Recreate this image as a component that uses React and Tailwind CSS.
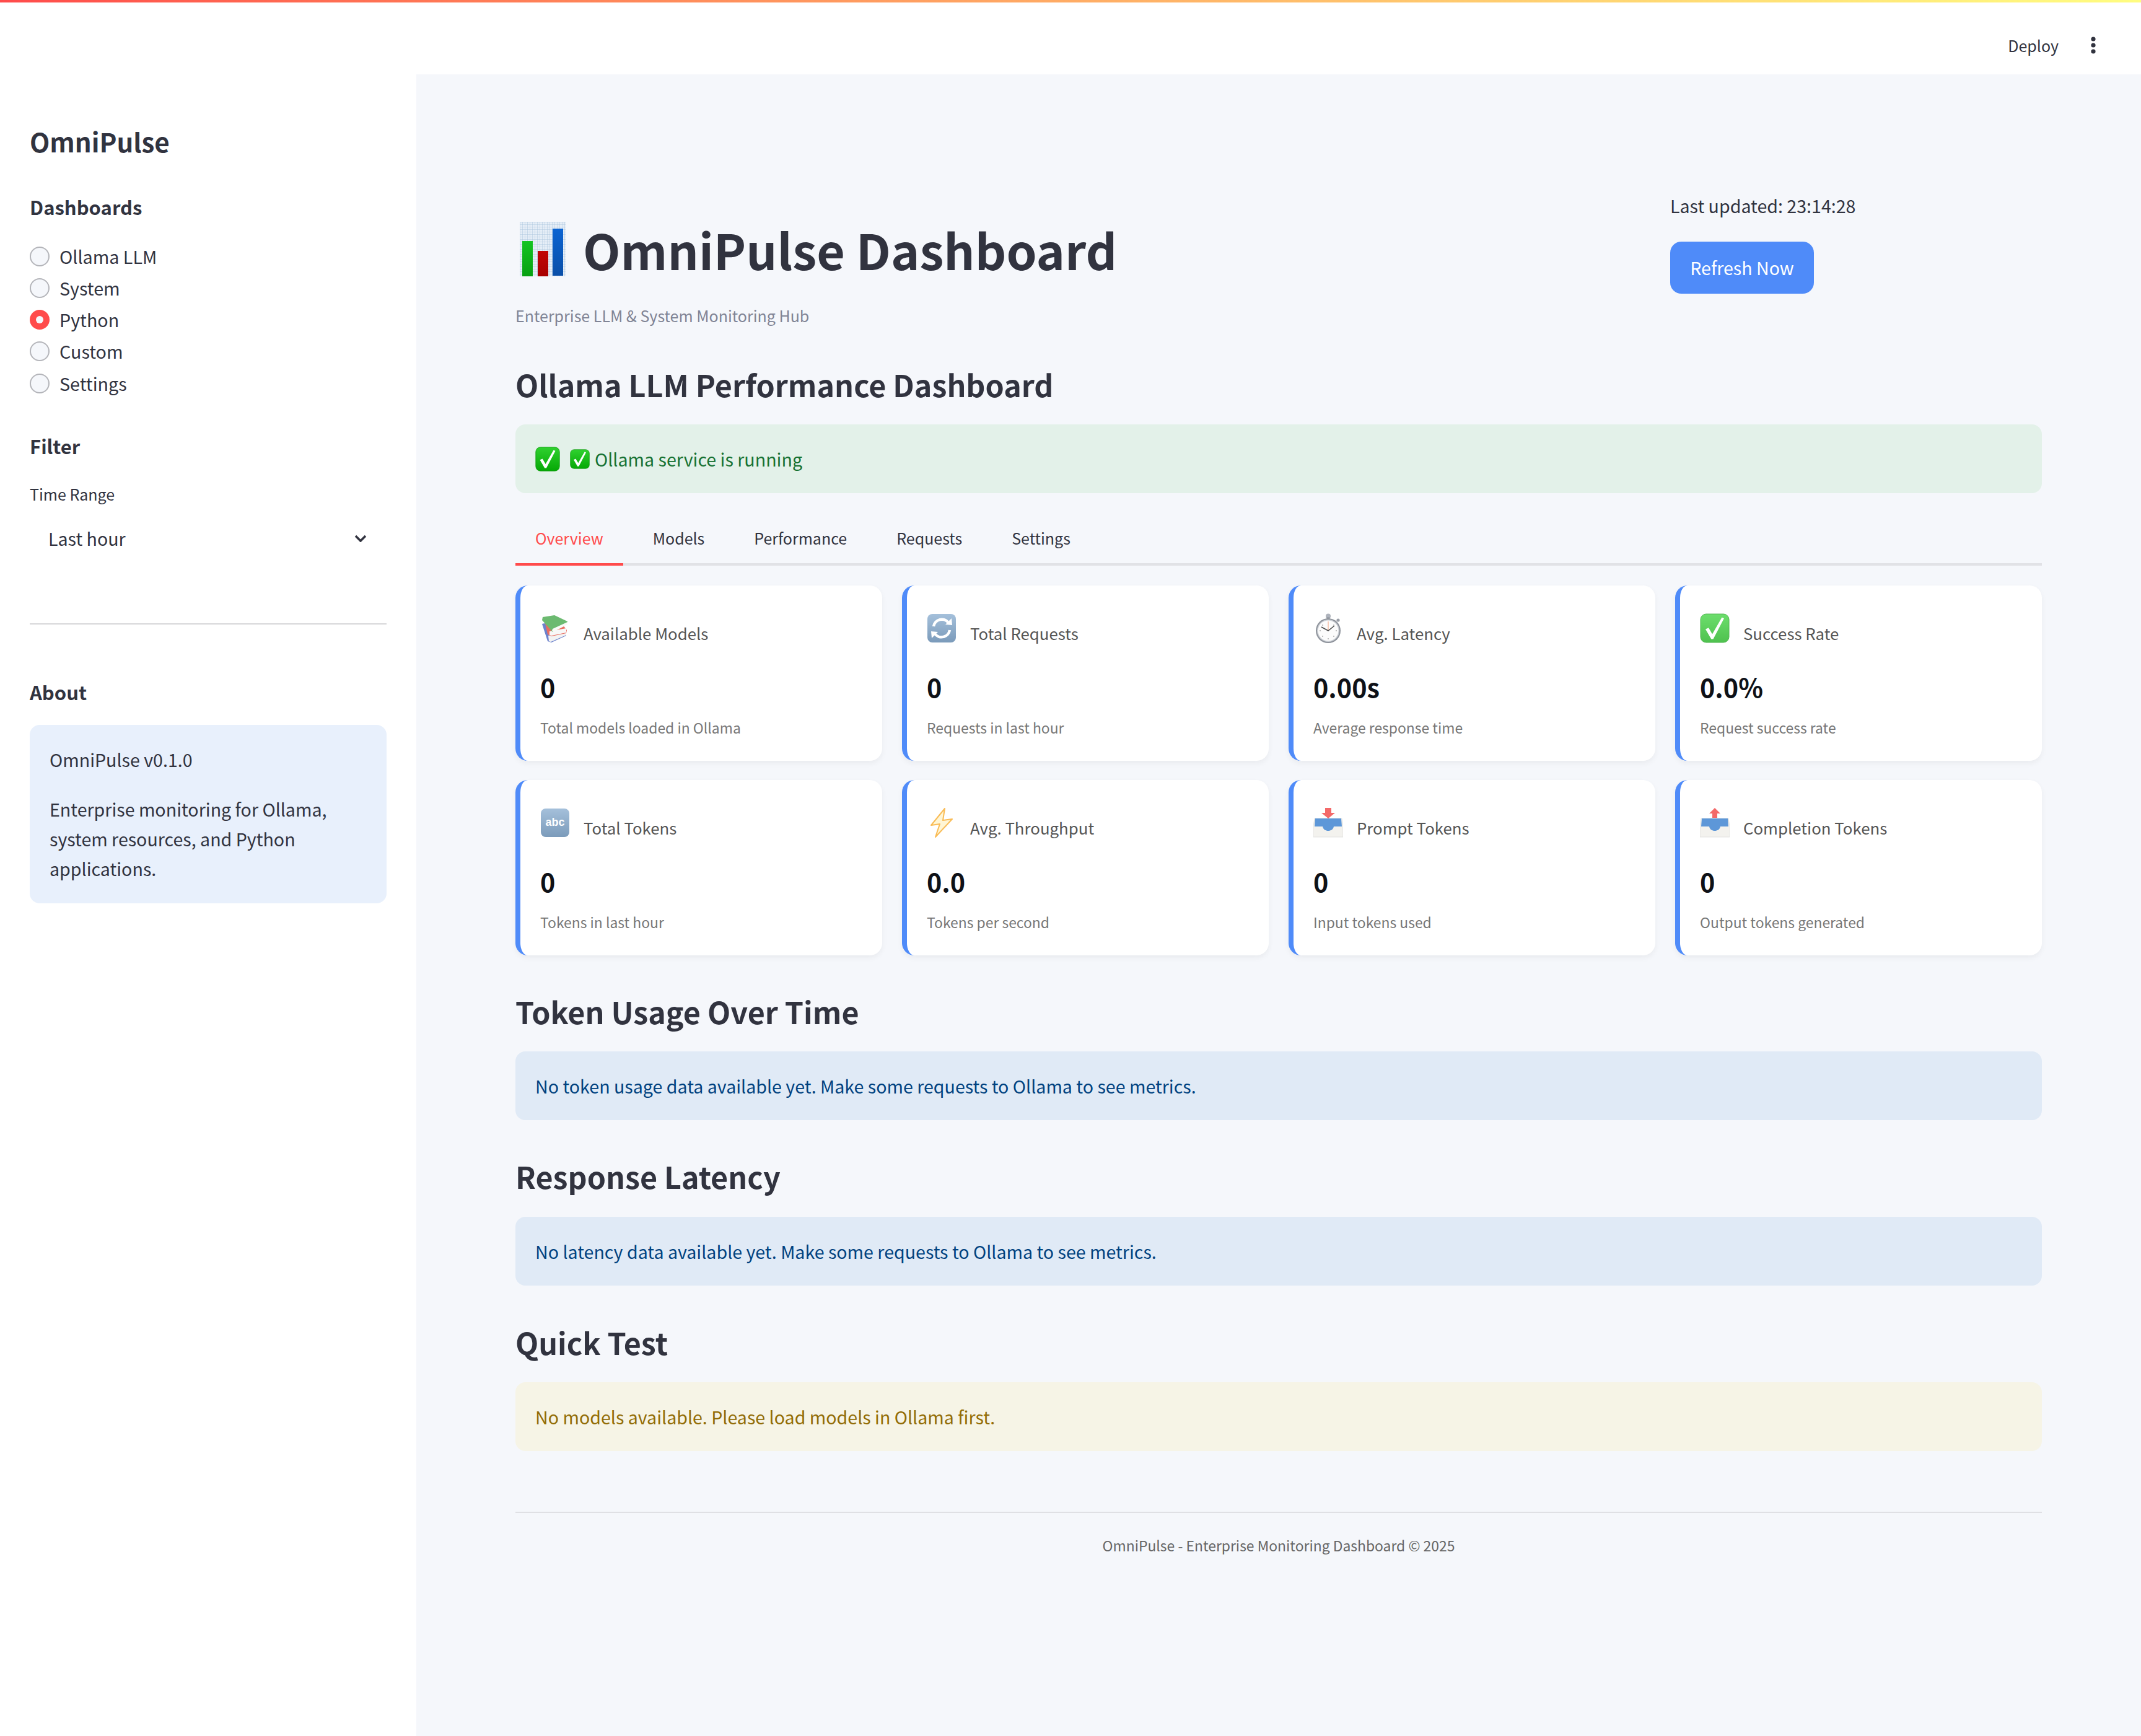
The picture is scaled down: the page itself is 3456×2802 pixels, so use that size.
import React from "react";

const Check = ({ className }) => (
  <svg viewBox="0 0 48 48" className={className}>
    <defs>
      <linearGradient id="chk" x1="0" y1="0" x2="0" y2="1">
        <stop offset="0" stopColor="#2fd12f" />
        <stop offset="1" stopColor="#05a805" />
      </linearGradient>
    </defs>
    <rect x="1" y="1" width="46" height="46" rx="9" fill="url(#chk)" stroke="#0b9a0b" strokeWidth="1" />
    <path d="M9 25.5l5-2.2 6 10.2L35.5 6.5 39 8 21.5 41.5h-3.2z" fill="#fff" />
  </svg>
);

const ChartEmoji = () => (
  <svg viewBox="0 0 74 88" className="w-[74px] h-[88px] shrink-0">
    <defs>
      <pattern id="grid" width="4" height="4" patternUnits="userSpaceOnUse">
        <rect width="4" height="4" fill="#e6eef7" />
        <path d="M4 0H0V4" fill="none" stroke="#a9c3dc" strokeWidth="0.9" />
      </pattern>
      <linearGradient id="gb" x1="0" y1="0" x2="0" y2="1">
        <stop offset="0" stopColor="#12c422" />
        <stop offset="1" stopColor="#07a012" />
      </linearGradient>
      <linearGradient id="rb" x1="0" y1="0" x2="0" y2="1">
        <stop offset="0" stopColor="#c20505" />
        <stop offset="1" stopColor="#a80000" />
      </linearGradient>
      <linearGradient id="bb" x1="0" y1="0" x2="0" y2="1">
        <stop offset="0" stopColor="#0c64d2" />
        <stop offset="1" stopColor="#0a4fa8" />
      </linearGradient>
    </defs>
    <rect width="74" height="88" fill="url(#grid)" />
    <rect x="4" y="31" width="17" height="57" fill="url(#gb)" />
    <rect x="29" y="47" width="17" height="41" fill="url(#rb)" />
    <rect x="53" y="11" width="17" height="76" fill="url(#bb)" />
  </svg>
);

const Books = () => (
  <svg viewBox="0 0 48 48" className="w-12 h-12">
    <path d="M3 17l4-1 34 13 1 7-24 11-6-2z" fill="#2f4fb8" />
    <path d="M13 36l29-7v6L17 46l-3-1z" fill="#eeeeee" />
    <path d="M8 16l24-3 11 14-1 5-24 5-6-3z" fill="#e0301e" />
    <path d="M15 29l27-5v7l-24 5-3-1z" fill="#f6f6f6" />
    <path d="M4 6l19-3 21 10v4L20 30 3 11z" fill="#2f9e35" />
    <path d="M20 25l24-11v4L21 30l-2-2z" fill="#f8f8f6" />
  </svg>
);

const Refresh = () => (
  <svg viewBox="0 0 48 48" className="w-12 h-12">
    <defs>
      <linearGradient id="rf" x1="0" y1="0" x2="0" y2="1">
        <stop offset="0" stopColor="#7fa6cc" />
        <stop offset="1" stopColor="#44719e" />
      </linearGradient>
    </defs>
    <rect x="1" y="1" width="46" height="46" rx="8" fill="url(#rf)" />
    <path d="M11 21a13.5 13.5 0 0 1 24-6" fill="none" stroke="#fff" strokeWidth="4.5" />
    <path d="M30 18l11 1-1-11z" fill="#fff" />
    <path d="M37 27a13.5 13.5 0 0 1-24 6" fill="none" stroke="#fff" strokeWidth="4.5" />
    <path d="M18 30l-11-1 1 11z" fill="#fff" />
  </svg>
);

const Stopwatch = () => (
  <svg viewBox="0 0 48 48" className="w-12 h-12">
    <circle cx="24" cy="4.5" r="4" fill="#8c93a0" />
    <rect x="21.5" y="6" width="5" height="5" fill="#6f7682" />
    <circle cx="40" cy="11" r="2.6" fill="#6f7682" />
    <circle cx="24" cy="28" r="20" fill="#5f6672" />
    <circle cx="24" cy="28" r="18" fill="#b5bac2" />
    <circle cx="24" cy="28" r="16.5" fill="#fbfbfb" />
    <path d="M24 13v15" stroke="#ee7a45" strokeWidth="1" />
    <path d="M13 22l11 6 10-8" fill="none" stroke="#000" strokeWidth="1.6" />
    <g fill="#8a8a8a">
      <circle cx="24" cy="41" r="1" />
      <circle cx="11" cy="28" r="1" />
      <circle cx="37" cy="28" r="1" />
      <circle cx="15" cy="37" r="1" />
      <circle cx="33" cy="37" r="1" />
      <circle cx="15" cy="19" r="1" />
      <circle cx="33" cy="19" r="1" />
    </g>
  </svg>
);

const Abc = () => (
  <svg viewBox="0 0 48 48" className="w-12 h-12">
    <defs>
      <linearGradient id="ab" x1="0" y1="0" x2="0" y2="1">
        <stop offset="0" stopColor="#7fa6cc" />
        <stop offset="1" stopColor="#44719e" />
      </linearGradient>
    </defs>
    <rect x="1" y="1" width="46" height="46" rx="8" fill="url(#ab)" />
    <text x="24" y="29" textAnchor="middle" fontFamily="Liberation Sans" fontWeight="700" fontSize="18" fill="#fff">abc</text>
  </svg>
);

const Bolt = () => (
  <svg viewBox="0 0 48 48" className="w-12 h-12">
    <path d="M29 1L7 28l14-2-7 21 27-29-15 2z" fill="#fff3c4" stroke="#f7a010" strokeWidth="2" strokeLinejoin="round" />
  </svg>
);

const Tray = ({ up }) => (
  <svg viewBox="0 0 48 48" className="w-12 h-12">
    <path d="M0 30l2-13h44l2 13v17H0z" fill="#eeede8" stroke="#cfcfca" strokeWidth="0.8" />
    <path d="M3 17h42l1 13H33c-1 5-5 7-9 7s-8-2-9-7H2z" fill="#1a6cc8" />
    {up ? (
      <path d="M24 0l9 9h-5v7h-8V9h-5z" fill="#ef2b2b" />
    ) : (
      <path d="M19 0h10v8h6L24 17 13 8h6z" fill="#ef2b2b" />
    )}
  </svg>
);

const radios = ["Ollama LLM", "System", "Python", "Custom", "Settings"];
const tabs = ["Overview", "Models", "Performance", "Requests", "Settings"];

const cards = [
  { icon: <Books />, label: "Available Models", value: "0", sub: "Total models loaded in Ollama" },
  { icon: <Refresh />, label: "Total Requests", value: "0", sub: "Requests in last hour" },
  { icon: <Stopwatch />, label: "Avg. Latency", value: "0.00s", sub: "Average response time" },
  { icon: <Check className="w-12 h-12" />, label: "Success Rate", value: "0.0%", sub: "Request success rate" },
  { icon: <Abc />, label: "Total Tokens", value: "0", sub: "Tokens in last hour" },
  { icon: <Bolt />, label: "Avg. Throughput", value: "0.0", sub: "Tokens per second" },
  { icon: <Tray />, label: "Prompt Tokens", value: "0", sub: "Input tokens used" },
  { icon: <Tray up />, label: "Completion Tokens", value: "0", sub: "Output tokens generated" },
];

function Sidebar() {
  return (
    <aside className="w-[672px] shrink-0 bg-white pl-12 pr-12 pt-20">
      <h2 className="text-[42px] leading-[56px] font-semibold text-[#31333f]">OmniPulse</h2>

      {/* dashboards */}
      <h3 className="mt-[54px] text-[31px] leading-[48px] font-semibold text-[#31333f]">Dashboards</h3>
      <div className="mt-[30px] flex flex-col">
        {radios.map((r) => (
          <div key={r} className="h-[51.25px] flex items-center gap-4 text-[28.7px] leading-[38px] text-[#31333f]">
            {r === "Python" ? (
              <span className="w-8 h-8 rounded-full bg-[#ff4b4b] flex items-center justify-center">
                <span className="w-3 h-3 rounded-full bg-[#f5f7fb]"></span>
              </span>
            ) : (
              <span className="w-8 h-8 rounded-full border-2 border-[#b4b5ba] bg-[#f5f7fb]"></span>
            )}
            {r}
          </div>
        ))}
      </div>

      {/* filter */}
      <h3 className="mt-[52px] text-[31px] leading-[48px] font-semibold text-[#31333f]">Filter</h3>
      <div className="mt-9 text-[25px] leading-[34px] text-[#31333f]">Time Range</div>
      <div className="mt-[15px] h-20 flex items-center justify-between pl-[30px] pr-[32px] text-[28.6px] leading-[38px] text-[#31333f]">
        Last hour
        <svg viewBox="0 0 20 12" className="w-5 h-3">
          <path d="M2 2l8 8 8-8" fill="none" stroke="#31333f" strokeWidth="3.6" />
        </svg>
      </div>

      <div className="mt-[97px] h-0.5 bg-[#d6d6d9]"></div>

      <h3 className="mt-[85px] text-[31px] leading-[48px] font-semibold text-[#31333f]">About</h3>
      <div className="mt-[29px] rounded-2xl bg-[#e8f0fc] p-8 text-[28.6px] leading-[48px] text-[#31333f]">
        <p>OmniPulse v0.1.0</p>
        <p className="mt-8">Enterprise monitoring for Ollama, system resources, and Python applications.</p>
      </div>
    </aside>
  );
}

function MetricCard({ icon, label, value, sub }) {
  return (
    <div className="h-[283px] rounded-[20px] bg-white border-l-8 border-[#4f8bf9] pl-8 pt-[45px] shadow-[0_4px_10px_rgba(0,0,0,0.05)]">
      <div className="flex items-end gap-[22px] h-[50px]">
        <span className="w-12 h-12 opacity-70 shrink-0 self-start">{icon}</span>
        <span className="text-[25.8px] leading-9 text-[#555555]">{label}</span>
      </div>
      <div className="mt-[40px] text-[41.3px] leading-[56px] font-semibold text-[#0e1117]">{value}</div>
      <div className="mt-[20px] text-[22.9px] leading-9 text-[#777777]">{sub}</div>
    </div>
  );
}

function Banner({ className, children }) {
  return <div className={`h-[111px] rounded-2xl px-8 flex items-center text-[28.6px] leading-10 ${className}`}>{children}</div>;
}

export default function App() {
  return (
    <div className="min-h-[2802px] flex flex-col bg-white font-['Noto_Sans_CJK_SC','Noto_Sans',sans-serif]">
      {/* ===== TOP BAR ===== */}
      <div className="h-1 bg-gradient-to-r from-[#ff4b4b] to-[#fffd80]"></div>
      <header className="h-[116px] pt-[22px] pr-[73px] flex items-center justify-end gap-[52px] bg-white">
        <span className="text-[25px] leading-9 text-[#31333f]">Deploy</span>
        <svg viewBox="0 0 8 28" className="w-2 h-7">
          <circle cx="4" cy="4" r="3.6" fill="#31333f" />
          <circle cx="4" cy="14" r="3.6" fill="#31333f" />
          <circle cx="4" cy="24" r="3.6" fill="#31333f" />
        </svg>
      </header>

      <div className="flex-1 flex">
        <Sidebar />

        {/* ===== MAIN ===== */}
        <main className="flex-1 bg-[#f5f7fb] px-40 pt-[192px]">
          <div className="flex justify-between">
            <div>
              <div className="mt-10 flex items-center gap-7 pl-[7px]">
                <ChartEmoji />
                <h1 className="text-[78.7px] leading-[100px] font-bold text-[#31333f]">OmniPulse Dashboard</h1>
              </div>
              <p className="mt-[37px] text-[25px] leading-10 text-[#808495]">Enterprise LLM &amp; System Monitoring Hub</p>
            </div>
            <div className="w-[600px]">
              <p className="text-[28.6px] leading-10 text-[#31333f]">Last updated: 23:14:28</p>
              <button className="mt-[38px] w-[232px] h-[84px] rounded-[18px] bg-[#4f8bf9] text-white text-[28.6px]">Refresh Now</button>
            </div>
          </div>

          <h2 className="mt-[55px] text-[48.4px] leading-[72px] font-semibold text-[#31333f]">Ollama LLM Performance Dashboard</h2>
          <Banner className="mt-[29px] bg-[#e3f1e9] text-[#177233]">
            <Check className="w-10 h-10 shrink-0" />
            <Check className="w-8 h-8 shrink-0 ml-4" />
            <span className="ml-2">Ollama service is running</span>
          </Banner>

          {/* ===== TABS ===== */}
          <div className="mt-[52px] flex gap-4 border-b-4 border-[#e1e2e6]">
            {tabs.map((t, i) => (
              <div
                key={t}
                className={`-mb-1 px-8 pb-[21px] text-[25px] leading-10 border-b-4 ${
                  i === 0 ? "border-[#ff4b4b] text-[#ff4b4b]" : "border-transparent text-[#31333f]"
                }`}
              >
                {t}
              </div>
            ))}
          </div>

          {/* ===== METRICS ===== */}
          <div className="mt-8 grid grid-cols-4 gap-x-8 gap-y-[31px]">
            {cards.map((c) => (
              <MetricCard key={c.label} {...c} />
            ))}
          </div>

          <h2 className="mt-[54px] text-[48.4px] leading-[72px] font-semibold text-[#31333f]">Token Usage Over Time</h2>
          <Banner className="mt-[29px] bg-[#e0eaf6] text-[#004280]">No token usage data available yet. Make some requests to Ollama to see metrics.</Banner>

          <h2 className="mt-[54px] text-[48.4px] leading-[72px] font-semibold text-[#31333f]">Response Latency</h2>
          <Banner className="mt-[30px] bg-[#e0eaf6] text-[#004280]">No latency data available yet. Make some requests to Ollama to see metrics.</Banner>

          <h2 className="mt-[55px] text-[48.4px] leading-[72px] font-semibold text-[#31333f]">Quick Test</h2>
          <Banner className="mt-[29px] bg-[#f6f4e6] text-[#926c05]">No models available. Please load models in Ollama first.</Banner>

          {/* ===== FOOTER ===== */}
          <div className="mt-[98px] h-0.5 bg-[#dfe0e4]"></div>
          <p className="mt-[34px] text-center text-[22.9px] leading-9 text-[#666666]">OmniPulse - Enterprise Monitoring Dashboard © 2025</p>
        </main>
      </div>
    </div>
  );
}
